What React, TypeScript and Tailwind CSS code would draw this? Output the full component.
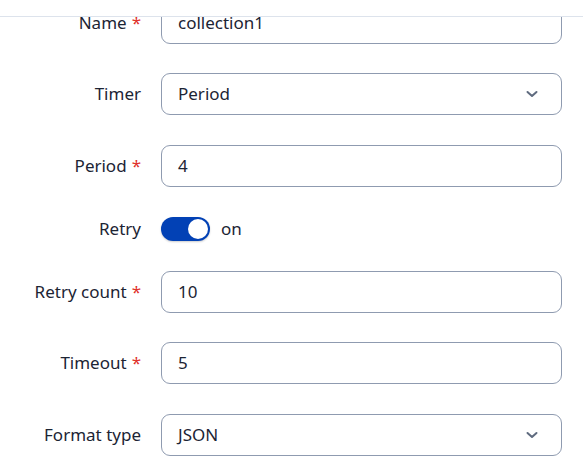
import React from "react";

const font = { fontFamily: '"Noto Sans", "Open Sans", sans-serif' };

function Label({ text, required }: { text: string; required?: boolean }) {
  return (
    <div className="w-[141px] shrink-0 text-right text-[17px] text-[#1c2434]">
      {text}
      {required && <span className="ml-[5px] text-[#e0312b]">*</span>}
    </div>
  );
}

function Chevron() {
  return (
    <svg width="12" height="8" viewBox="0 0 12 8" fill="none" className="shrink-0">
      <path d="M1.5 2 L6 6 L10.5 2" stroke="#5f6b7f" strokeWidth="2" strokeLinecap="round" strokeLinejoin="round" />
    </svg>
  );
}

function Field({ value, select }: { value: string; select?: boolean }) {
  return (
    <div className="flex h-[42px] flex-1 items-center justify-between rounded-[9px] border border-[#8f9bb0] bg-white pl-4 pr-[23px] text-[17px] text-[#1c2434]">
      <span>{value}</span>
      {select && <Chevron />}
    </div>
  );
}

function Row({ label, required, children }: { label: string; required?: boolean; children: React.ReactNode }) {
  return (
    <div className="flex items-center gap-[20px]">
      <Label text={label} required={required} />
      {children}
    </div>
  );
}

export default function App() {
  return (
    <div className="relative h-[466px] w-[583px] overflow-hidden bg-white" style={font}>
      <div className="absolute left-0 right-0 top-0 z-10 h-[17px] border-b border-[#dde3ec] bg-white" />
      <div className="flex flex-col gap-[29.5px] pr-[21px] pt-[1.5px]">
        <Row label="Name" required>
          <Field value="collection1" />
        </Row>
        <Row label="Timer">
          <Field value="Period" select />
        </Row>
        <Row label="Period" required>
          <Field value="4" />
        </Row>
        <div className="flex h-[25px] items-center gap-[20px]">
          <Label text="Retry" />
          <div className="flex items-center gap-[11px]">
            <div className="flex h-[24px] w-[49px] items-center justify-end rounded-full bg-[#0241b5] pr-[2px] shadow-[0_1px_2px_rgba(0,0,0,0.2)]">
              <div className="h-[20px] w-[20px] rounded-full bg-white" />
            </div>
            <span className="text-[17px] text-[#1c2434]">on</span>
          </div>
        </div>
        <Row label="Retry count" required>
          <Field value="10" />
        </Row>
        <Row label="Timeout" required>
          <Field value="5" />
        </Row>
        <Row label="Format type">
          <Field value="JSON" select />
        </Row>
      </div>
    </div>
  );
}
